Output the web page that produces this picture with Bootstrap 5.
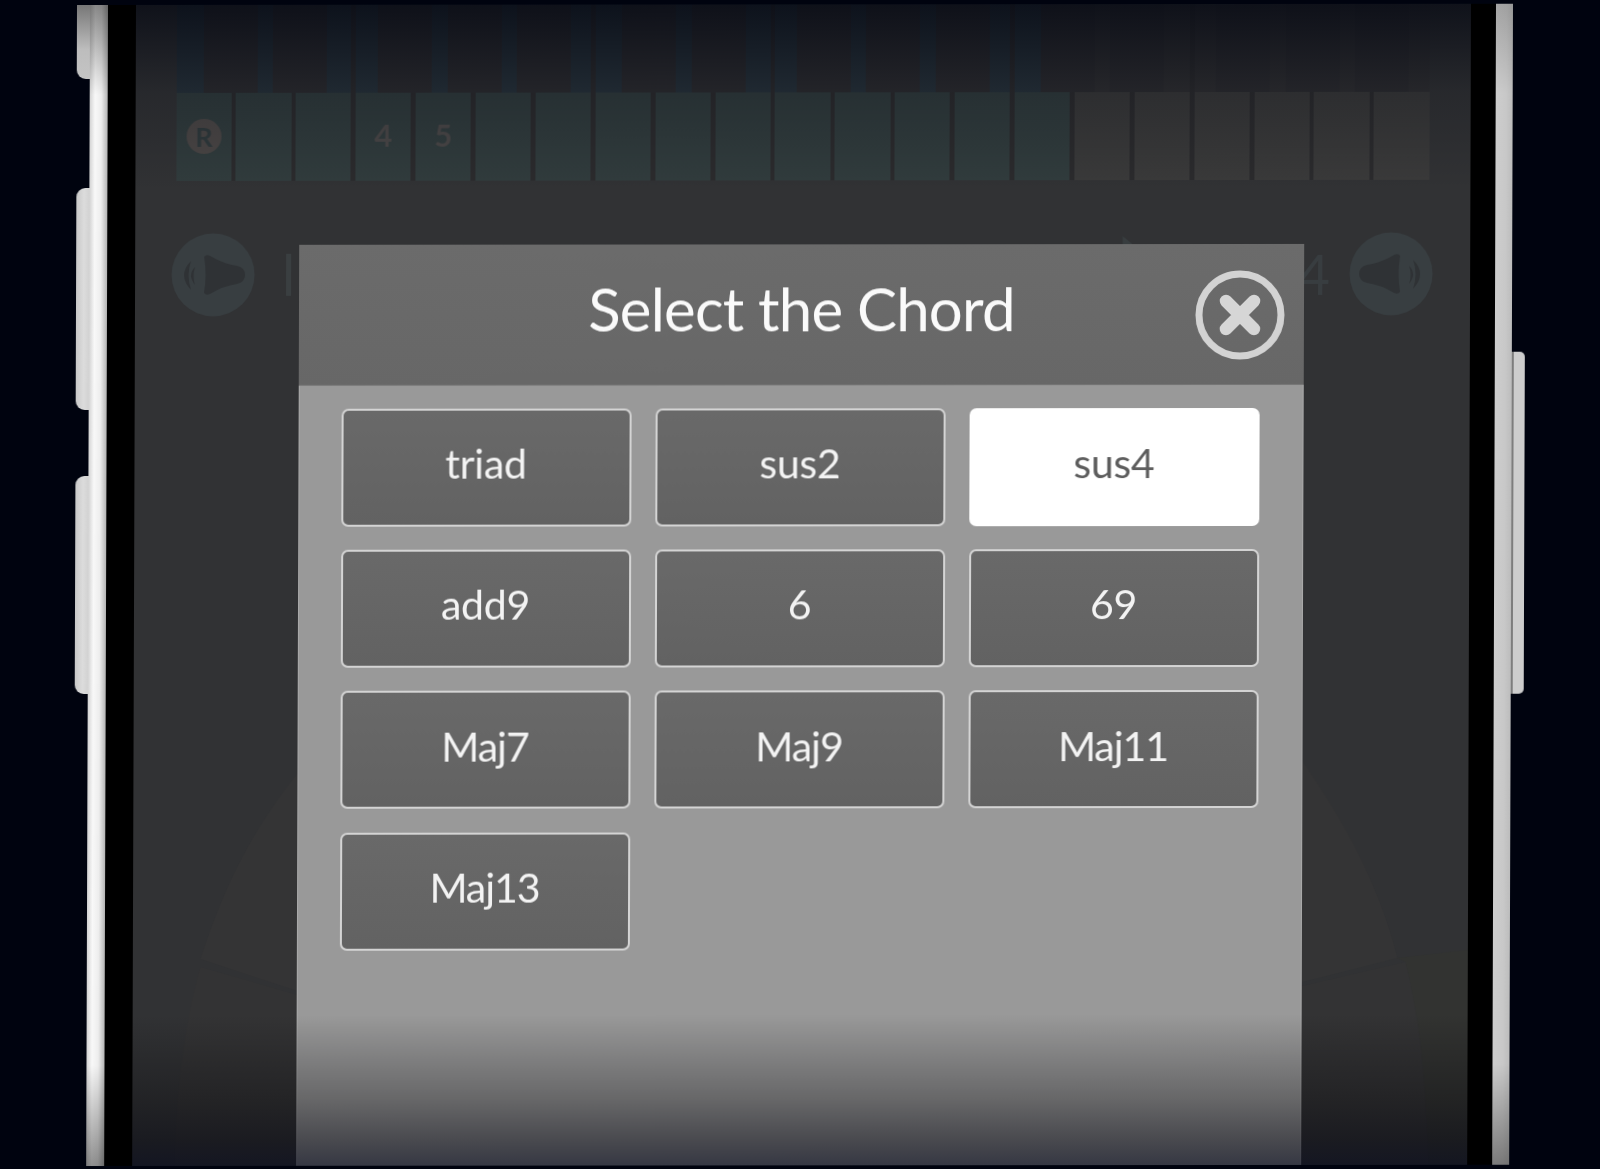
<!DOCTYPE html>
<html lang="en">
<head>
    <meta charset="UTF-8">
    <meta name="viewport" content="width=device-width, initial-scale=1.0">
    <title>Select the Chord</title>
    <link rel="stylesheet" href="https://cdn.jsdelivr.net/npm/bootstrap@5.3.2/dist/css/bootstrap.min.css">
    <style>
        html, body { height: 100%; overflow: hidden; }
        body { background: #00030f; font-family: "Lato", "Open Sans", sans-serif; }

        /* the photo of the phone leans slightly, hence the skew */
        .phone { height: 1161px; margin: 4.5px 0 0 90px; width: 1423px; transform: skew(-0.19deg, -0.05deg); transform-origin: 0 0; filter: blur(0.5px); }
        .rail { flex: 0 0 18px; position: relative; }
        .rail-left { background: linear-gradient(180deg, rgba(0,0,0,.45) 0, rgba(0,0,0,0) 90px, rgba(0,0,0,0) 1060px, rgba(0,0,0,.42) 100%), linear-gradient(90deg, #d2d2d2 0, #f8f8f8 30%, #ededed 65%, #b4b4b4 100%); }
        .rail-right { flex-basis: 17px; background: linear-gradient(180deg, rgba(0,0,0,.2) 0, rgba(0,0,0,0) 90px, rgba(0,0,0,0) 1060px, rgba(0,0,0,.4) 100%), linear-gradient(90deg, #cdcdcd 0, #c8c8c8 60%, #bcbcbc 100%); }
        .side-btn { position: absolute; width: 13px; background: linear-gradient(90deg, #c8c8c8, #dcdcdc 60%, #d2d2d2); }
        .rail-left .side-btn { left: -13px; border-radius: 9px 0 0 9px; }
        .rail-right .side-btn { left: 17px; width: 13px; border-radius: 0 5px 5px 0; border-left: 2px solid #7d7d7d; background: #cdcdcd; }
        .btn-a { top: 0; height: 74px; border-top-left-radius: 0 !important; background: linear-gradient(180deg, #777, #bdbdbd 60%, #c4c4c4) !important; }
        .btn-b { top: 183px; height: 222px; }
        .btn-c { top: 471px; height: 218px; }
        .btn-d { top: 348px; height: 342px; }
        .bezel-l { flex: 0 0 27.5px; background: #000; }
        .bezel-r { flex: 0 0 25px; background: #000; }

        .screen { flex: 0 0 1335.5px; position: relative; overflow: hidden; background: #313234; }
        .screen::after { content: ""; position: absolute; inset: 0; z-index: 5; pointer-events: none; background: linear-gradient(180deg, rgba(5,8,18,.76) 0, rgba(5,8,18,.22) 88px, rgba(5,8,18,0) 186px, rgba(6,6,10,0) 1010px, rgba(6,6,10,.34) 1095px, rgba(6,7,16,.54) 1135px, rgba(5,8,25,.67) 100%); }
        .backdrop { position: absolute; inset: 0; width: 100%; height: 100%; }

        .keyboard { position: relative; height: 176px; margin: 0 41.5px 0 41px; gap: 4.7px; background: #2b2b2d; }
        .wkey { flex: 1 1 0; background: linear-gradient(180deg, #27323a 0, #27323a 50%, #303b3c 50%, #313c3d 100%); font-size: 31px; font-weight: 700; line-height: 1; color: #4a4747; padding-bottom: 30px; }
        .wkey-plain { background: linear-gradient(180deg, #2f2f31 0, #2f2f31 50%, #383838 50%, #3a3a3a 100%); }
        .root-mark { width: 35px; height: 35px; background: #4a4645; color: #2f393b; font-size: 27px; margin-right: -0.5px; }
        .bkey { position: absolute; top: 0; width: 54px; height: 88px; background: #2c2c2f; }

        .controls { margin: 52px 37px 0 36.5px; height: 84px; }
        .spk { width: 84px; height: 84px; }
        .level-bar { width: 5px; height: 42px; background: #3a3f41; margin-left: 31px; }
        .level-num { font-size: 56px; line-height: 1; color: #383d40; margin-right: 19px; }

        .chord-panel { position: absolute; top: 240px; left: 164.5px; width: 1005px; bottom: 0; z-index: 3; background: #999; }
        .chord-panel .card-header { height: 140.5px; background: linear-gradient(180deg, #6b6b6b, #676767); border-bottom: 1px solid #757575; padding-top: 28px; }
        .chord-title { font-family: "Lato", "Open Sans", sans-serif; font-size: 60px; font-weight: 400; line-height: 72px; color: #fafafa; letter-spacing: -.8px; }
        .close-x { position: absolute; top: 25px; right: 18px; width: 92px; height: 92px; padding: 0; border: 0; }
        .chord-panel .card-body { padding: 23px 0 0 41.5px; border-left: 1px solid #a9a9a9; border-right: 1px solid #a9a9a9; }
        .chord-grid { grid-template-columns: repeat(3, 290px); grid-auto-rows: 118px; column-gap: 24px; row-gap: 23.4px; }
        .chord-btn { font-size: 41px; line-height: 1; padding: 0 0 8px; color: #f3f3f3; letter-spacing: -.25px; background: linear-gradient(180deg, #696969, #626262); border: 2px solid #d4d4d4; border-radius: 7px; }
        .chord-btn:hover { color: #f3f3f3; background: #6c6c6c; border-color: #d4d4d4; }
        .chord-btn.active, .chord-btn.active:hover { color: #5d5d5d; background: #fff; border-color: #fff; }
        .chord-maj { letter-spacing: -1px; }
    </style>
</head>
<body>
    <div class="phone d-flex">
        <div class="rail rail-left">
            <div class="side-btn btn-a"></div>
            <div class="side-btn btn-b"></div>
            <div class="side-btn btn-c"></div>
        </div>
        <div class="bezel-l"></div>

        <div class="screen">
            <!-- dome behind the panel, barely visible -->
            <svg class="backdrop" viewBox="135.5 4 1335.5 1161" preserveAspectRatio="none">
                <path d="M1400 958 L1471 950 L1471 1165 L1432 1165 C1428 1060 1420 1010 1408 962 Z" fill="#323331"/>
                <path d="M203 958 C228 880 258 825 300 772 L1305 762 C1345 820 1380 880 1400 958 L1305 982 L300 990 Z" fill="#343435"/>
                <path d="M203 966 L300 994 L1305 986 L1408 962 C1420 1010 1428 1060 1432 1165 L178 1165 C180 1080 188 1020 203 966 Z" fill="#333334"/>
                <path d="M1123 245 L1123 236 L1134 245 Z" fill="#383d3f"/>
            </svg>

            <div class="keyboard d-flex" id="keyboard"></div>

            <div class="controls d-flex justify-content-between align-items-center position-relative">
                <div class="d-flex align-items-center">
                    <svg class="spk" viewBox="0 0 84 84">
                        <circle cx="42" cy="42" r="41.5" fill="#383e41"/>
                        <path d="M33 24 Q35 21 39 23 Q52 31 66 33 Q74 35 74 42 Q74 49 66 51 Q52 53 39 61 Q35 63 33 60 Q36 42 33 24 Z" fill="#2f3235"/>
                        <path d="M20 28 Q6 42 20 57 Q15 42 20 28 Z M24 34 Q16 42 24 52 Q21 43 24 34 Z" fill="#2f3235"/>
                    </svg>
                    <div class="level-bar"></div>
                </div>
                <div class="d-flex align-items-center">
                    <span class="level-num">4</span>
                    <svg class="spk" viewBox="0 0 84 84">
                        <circle cx="42" cy="42" r="41.5" fill="#383e41"/>
                        <g transform="translate(84 0) scale(-1 1)">
                            <path d="M33 24 Q35 21 39 23 Q52 31 66 33 Q74 35 74 42 Q74 49 66 51 Q52 53 39 61 Q35 63 33 60 Q36 42 33 24 Z" fill="#2f3235"/>
                            <path d="M20 28 Q6 42 20 57 Q15 42 20 28 Z M24 34 Q16 42 24 52 Q21 43 24 34 Z" fill="#2f3235"/>
                        </g>
                    </svg>
                </div>
            </div>

            <div class="card chord-panel border-0 rounded-0">
                <div class="card-header rounded-0 text-center position-relative">
                    <h2 class="chord-title mb-0">Select the Chord</h2>
                    <button class="btn close-x" type="button" aria-label="Close">
                        <svg width="92" height="92" viewBox="0 0 92 92">
                            <circle cx="46" cy="46" r="41" fill="none" stroke="#d3d3d3" stroke-width="7"/>
                            <path d="M32 32 L60 60 M60 32 L32 60" fill="none" stroke="#d6d6d6" stroke-width="12.5" stroke-linecap="round"/>
                        </svg>
                    </button>
                </div>
                <div class="card-body">
                    <div class="d-grid chord-grid">
                        <button class="btn chord-btn" type="button">triad</button>
                        <button class="btn chord-btn" type="button">sus2</button>
                        <button class="btn chord-btn active" type="button">sus4</button>
                        <button class="btn chord-btn" type="button">add9</button>
                        <button class="btn chord-btn" type="button">6</button>
                        <button class="btn chord-btn" type="button">69</button>
                        <button class="btn chord-btn chord-maj" type="button">Maj7</button>
                        <button class="btn chord-btn chord-maj" type="button">Maj9</button>
                        <button class="btn chord-btn chord-maj" type="button">Maj11</button>
                        <button class="btn chord-btn chord-maj" type="button">Maj13</button>
                    </div>
                </div>
            </div>
        </div>

        <div class="bezel-r"></div>
        <div class="rail rail-right">
            <div class="side-btn btn-d"></div>
        </div>
    </div>

    <script src="https://cdn.jsdelivr.net/npm/bootstrap@5.3.2/dist/js/bootstrap.bundle.min.js"></script>
    <script>
        // 21 white keys, only the first 15 are in the scale
        const keyboard = document.getElementById("keyboard");
        const labels = { 0: "R", 3: "4", 4: "5" };
        for (let i = 0; i < 21; i++) {
            const key = document.createElement("div");
            key.className = "wkey d-flex justify-content-center align-items-end" + (i >= 15 ? " wkey-plain" : "");
            if (labels[i] === "R") {
                key.innerHTML = '<span class="root-mark rounded-circle d-flex justify-content-center align-items-center">R</span>';
                key.style.paddingBottom = "27px";
            } else if (labels[i]) {
                key.textContent = labels[i];
            }
            keyboard.appendChild(key);
        }
        // black keys, left edges in px from the keyboard's start
        [27, 96, 201, 271, 340, 445, 515, 620, 689, 759, 864, 933, 1039, 1109, 1178].forEach(left => {
            const key = document.createElement("div");
            key.className = "bkey";
            key.style.left = left + "px";
            keyboard.appendChild(key);
        });
    </script>
</body>
</html>
